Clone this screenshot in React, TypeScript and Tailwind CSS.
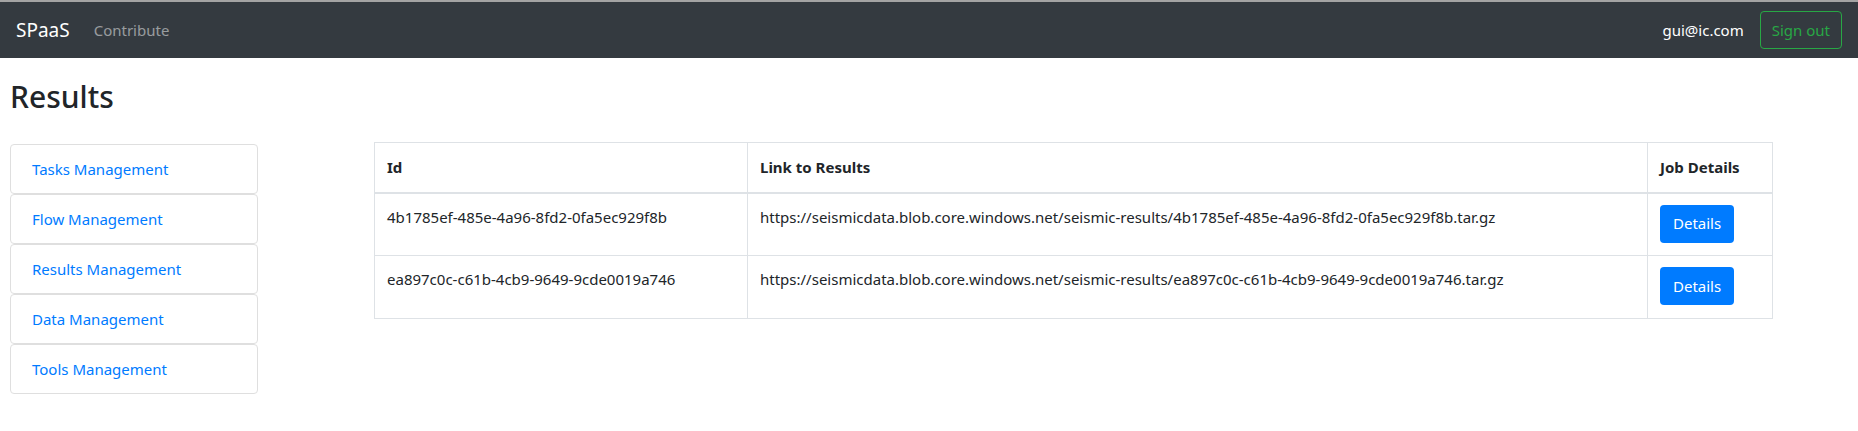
import React from 'react';

const menu = ['Tasks Management', 'Flow Management', 'Results Management', 'Data Management', 'Tools Management'];

const results = [
  {
    id: '4b1785ef-485e-4a96-8fd2-0fa5ec929f8b',
    link: 'https://seismicdata.blob.core.windows.net/seismic-results/4b1785ef-485e-4a96-8fd2-0fa5ec929f8b.tar.gz',
  },
  {
    id: 'ea897c0c-c61b-4cb9-9649-9cde0019a746',
    link: 'https://seismicdata.blob.core.windows.net/seismic-results/ea897c0c-c61b-4cb9-9649-9cde0019a746.tar.gz',
  },
];

export default function App() {
  return (
    <div className="min-h-[431px] bg-white text-[15px] text-[#212529] font-['Noto_Sans',sans-serif]">
      {/* navbar */}
      <nav className="border-t-2 border-[#a3a3a3] bg-[#343a40] h-[58px] flex items-center px-4">
        <span className="text-white text-[19px] mr-6">SPaaS</span>
        <span className="text-white/50">Contribute</span>
        <div className="ml-auto flex items-center gap-4">
          <span className="text-white">gui@ic.com</span>
          <button className="h-[38px] px-[11px] border border-[#28a745] text-[#28a745] rounded">Sign out</button>
        </div>
      </nav>

      <div className="px-[10px]">
        <h2 className="text-[30px] font-medium leading-[38px] mt-[20px] mb-[26px]">Results</h2>

        <div className="flex items-start">
          {/* sidebar */}
          <div className="w-[248px] mt-[2px] flex flex-col">
            {menu.map((m) => (
              <a key={m} className="block h-[50px] border border-[#dfdfdf] rounded px-[21px] leading-[48px] text-[#007bff]">
                {m}
              </a>
            ))}
          </div>

          {/* results table */}
          <div className="ml-[116px] w-[1399px]">
            <table className="w-full border-collapse">
              <thead>
                <tr className="h-[50px]">
                  <th className="w-[373px] border border-[#dee2e6] border-b-2 text-left px-3 font-bold">Id</th>
                  <th className="w-[900px] border border-[#dee2e6] border-b-2 text-left px-3 font-bold">Link to Results</th>
                  <th className="border border-[#dee2e6] border-b-2 text-left px-3 font-bold">Job Details</th>
                </tr>
              </thead>
              <tbody>
                {results.map((r) => (
                  <tr key={r.id}>
                    <td className="border border-[#dee2e6] px-3 pt-[11px] pb-[12px] align-top h-[63px] leading-6">{r.id}</td>
                    <td className="border border-[#dee2e6] px-3 pt-[11px] pb-[12px] align-top leading-6">{r.link}</td>
                    <td className="border border-[#dee2e6] px-3 pt-[11px] pb-[12px] align-top">
                      <button className="h-[38px] px-[13px] bg-[#007bff] text-white rounded">Details</button>
                    </td>
                  </tr>
                ))}
              </tbody>
            </table>
          </div>
        </div>
      </div>
    </div>
  );
}
